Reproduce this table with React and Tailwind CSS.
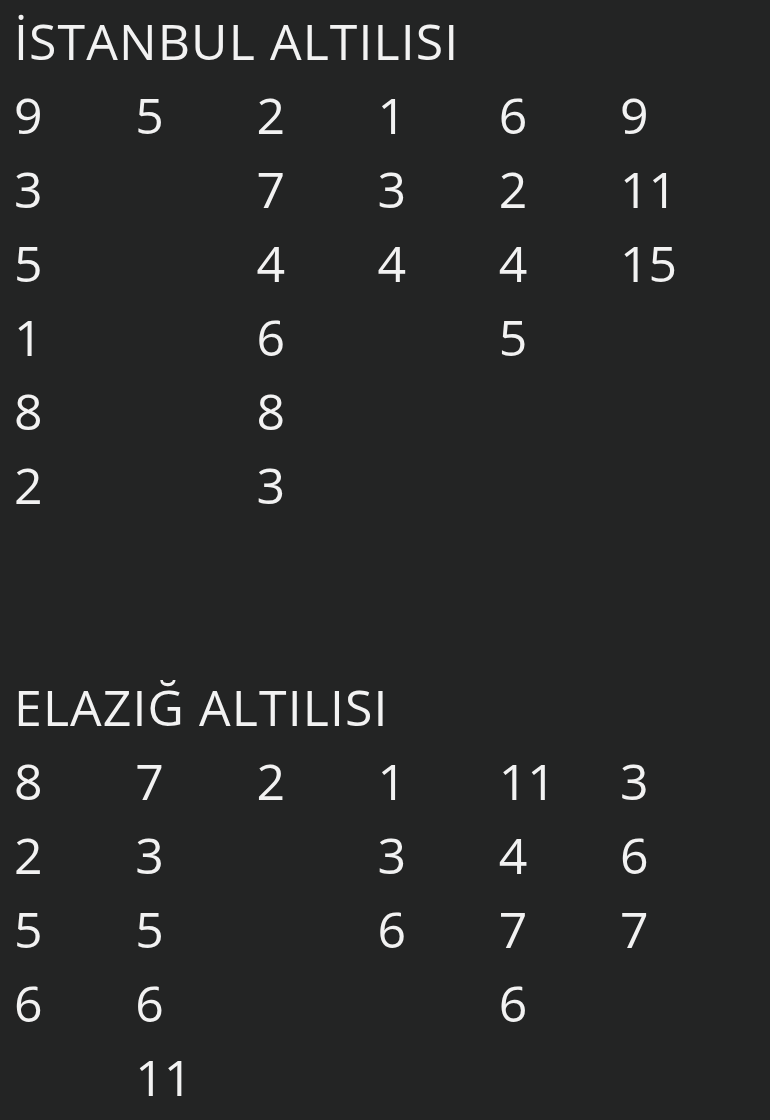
const istanbul = [
  ['9', '5', '2', '1', '6', '9'],
  ['3', '', '7', '3', '2', '11'],
  ['5', '', '4', '4', '4', '15'],
  ['1', '', '6', '', '5', ''],
  ['8', '', '8', '', '', ''],
  ['2', '', '3', '', '', ''],
];

const elazig = [
  ['8', '7', '2', '1', '11', '3'],
  ['2', '3', '', '3', '4', '6'],
  ['5', '5', '', '6', '7', '7'],
  ['6', '6', '', '', '6', ''],
  ['', '11', '', '', '', ''],
];

const Block = ({ title, rows }) => (
  <div>
    <div className="h-[74px] tracking-[1.1px]">{title}</div>
    {rows.map((row, i) => (
      <div key={i} className="grid grid-cols-[repeat(6,121.2px)] h-[74px]">
        {row.map((cell, j) => (
          <span key={j}>{cell}</span>
        ))}
      </div>
    ))}
  </div>
);

export default function App() {
  return (
    <div
      className="w-[770px] h-[1120px] overflow-hidden bg-[#232424] text-[#f2f2f2] pt-[4px] pl-[14px] text-[50px] leading-[74px] font-medium"
      style={{ fontFamily: '"Open Sans", "Noto Sans", sans-serif' }}
    >
      <Block title="İSTANBUL ALTILISI" rows={istanbul} />
      <div className="h-[148px]" />
      <Block title="ELAZIĞ ALTILISI" rows={elazig} />
    </div>
  );
}
